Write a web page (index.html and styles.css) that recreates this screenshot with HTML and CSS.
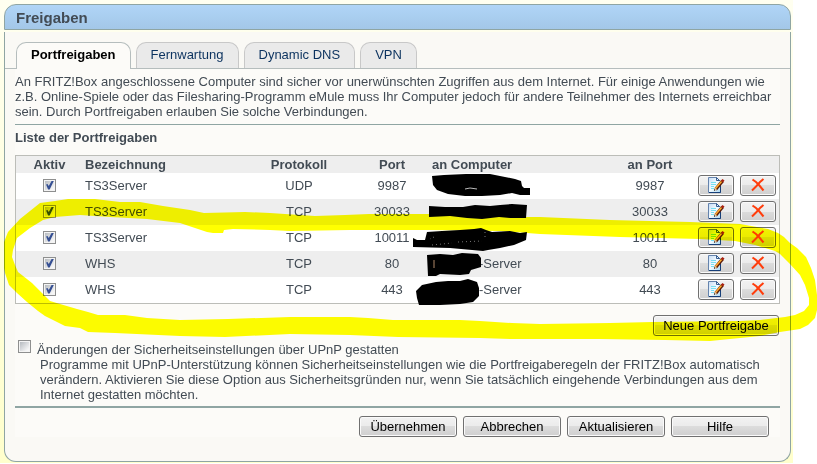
FILE: index.html
```html
<!DOCTYPE html>
<html lang="de">
<head>
  <meta charset="UTF-8" />
  <meta name="viewport" content="width=device-width, initial-scale=1.0" />
  <title>Freigaben</title>
  <link rel="stylesheet" href="styles.css">
</head>
<body>
  <!-- Shared button icons -->
  <svg class="defs" width="0" height="0" aria-hidden="true">
    <defs>
      <linearGradient id="paper" x1="0" y1="0" x2="1" y2="1">
        <stop offset="0" stop-color="#c5dcf5" />
        <stop offset="0.5" stop-color="#f4fbff" />
        <stop offset="1" stop-color="#a8d8f4" />
      </linearGradient>
      <symbol id="edit" viewBox="0 0 18 18">
        <path d="M1.5 1.5h8l4 4v11h-12z" fill="url(#paper)" stroke="#6583ac" />
        <path d="M13.5 9v7.5H2" fill="none" stroke="#173f78" />
        <path d="M9.5 1.5v3h3z" fill="#e8f3ff" stroke="#365d91" />
        <path d="M4 6.5h5M4 8.5h5M4 10.5h3M4 12.5h3" stroke="#76dff2" />
        <path d="M8.500 13.500L15.500 5" stroke="#5c1c08" stroke-width="3.400" />
        <path d="M8.500 12.500L14.500 5.500" stroke="#ffab2e" stroke-width="1.600" />
        <path d="M7 15l.5-3.500 2.500 2z" fill="#f5d6a8" />
        <path d="M7 15l.2-2 1.300 1z" fill="#111" />
        <path d="M14 4.500l1.500-1.500 2 1.500-1.500 2z" fill="#ab2110" />
      </symbol>
      <symbol id="delete" viewBox="0 0 14 14">
        <path d="M1.500 1.500L5 4l3 3 4.500 5.500M12.500 1L9 4 5.500 8 1 12.500" fill="none" stroke="#ff3d0c" stroke-width="2" />
      </symbol>
    </defs>
  </svg>

  <div class="page">
    <main class="panel">
      <h1>Freigaben</h1>
      <div class="panel-body">
        <nav class="tabs">
          <a class="tab active" href="#port">Portfreigaben</a>
          <a class="tab" href="#fern">Fernwartung</a>
          <a class="tab" href="#dns">Dynamic DNS</a>
          <a class="tab" href="#vpn">VPN</a>
        </nav>
        <div class="content">
          <p class="intro">An FRITZ!Box angeschlossene Computer sind sicher vor unerwünschten Zugriffen aus dem Internet. Für einige Anwendungen wie z.B. Online-Spiele oder das Filesharing-Programm eMule muss Ihr Computer jedoch für andere Teilnehmer des Internets erreichbar sein. Durch Portfreigaben erlauben Sie solche Verbindungen.</p>
          <h2>Liste der Portfreigaben</h2>
          <table class="rules">
            <colgroup>
              <col class="col-active"><col class="col-name"><col class="col-proto"><col class="col-port"><col><col class="col-target"><col class="col-actions">
            </colgroup>
            <thead>
              <tr>
                <th>Aktiv</th>
                <th class="left">Bezeichnung</th>
                <th>Protokoll</th>
                <th>Port</th>
                <th class="host">an Computer</th>
                <th>an Port</th>
                <th></th>
              </tr>
            </thead>
            <tbody>
              <tr>
                <td><input type="checkbox" aria-label="Aktiv" checked></td>
                <td class="left">TS3Server</td>
                <td>UDP</td>
                <td>9987</td>
                <td class="host"></td>
                <td>9987</td>
                <td><div class="actions">
                  <button aria-label="Bearbeiten"><svg class="edit"><use href="#edit" /></svg></button>
                  <button aria-label="Löschen"><svg class="delete"><use href="#delete" /></svg></button>
                </div></td>
              </tr>
              <tr>
                <td><input type="checkbox" aria-label="Aktiv" checked></td>
                <td class="left">TS3Server</td>
                <td>TCP</td>
                <td>30033</td>
                <td class="host"></td>
                <td>30033</td>
                <td><div class="actions">
                  <button aria-label="Bearbeiten"><svg class="edit"><use href="#edit" /></svg></button>
                  <button aria-label="Löschen"><svg class="delete"><use href="#delete" /></svg></button>
                </div></td>
              </tr>
              <tr>
                <td><input type="checkbox" aria-label="Aktiv" checked></td>
                <td class="left">TS3Server</td>
                <td>TCP</td>
                <td>10011</td>
                <td class="host"></td>
                <td>10011</td>
                <td><div class="actions">
                  <button aria-label="Bearbeiten"><svg class="edit"><use href="#edit" /></svg></button>
                  <button aria-label="Löschen"><svg class="delete"><use href="#delete" /></svg></button>
                </div></td>
              </tr>
              <tr>
                <td><input type="checkbox" aria-label="Aktiv" checked></td>
                <td class="left">WHS</td>
                <td>TCP</td>
                <td>80</td>
                <td class="host masked">-Server</td>
                <td>80</td>
                <td><div class="actions">
                  <button aria-label="Bearbeiten"><svg class="edit"><use href="#edit" /></svg></button>
                  <button aria-label="Löschen"><svg class="delete"><use href="#delete" /></svg></button>
                </div></td>
              </tr>
              <tr>
                <td><input type="checkbox" aria-label="Aktiv" checked></td>
                <td class="left">WHS</td>
                <td>TCP</td>
                <td>443</td>
                <td class="host masked">-Server</td>
                <td>443</td>
                <td><div class="actions">
                  <button aria-label="Bearbeiten"><svg class="edit"><use href="#edit" /></svg></button>
                  <button aria-label="Löschen"><svg class="delete"><use href="#delete" /></svg></button>
                </div></td>
              </tr>
            </tbody>
          </table>
          <div class="add">
            <button>Neue Portfreigabe</button>
          </div>
          <div class="upnp">
            <input type="checkbox" id="upnp">
            <label for="upnp">Änderungen der Sicherheitseinstellungen über UPnP gestatten</label>
          </div>
          <p class="hint">Programme mit UPnP-Unterstützung können Sicherheitseinstellungen wie die Portfreigaberegeln der FRITZ!Box automatisch verändern. Aktivieren Sie diese Option aus Sicherheitsgründen nur, wenn Sie tatsächlich eingehende Verbindungen aus dem Internet gestatten möchten.</p>
          <div class="buttons">
            <button>Übernehmen</button>
            <button>Abbrechen</button>
            <button>Aktualisieren</button>
            <button>Hilfe</button>
          </div>
        </div>
      </div>
    </main>
  </div>

  <!-- Blacked-out host names -->
  <svg class="overlay" width="817" height="464" viewBox="0 0 817 464" aria-hidden="true">
    <path d="M432 176L444 175 466 174 490 174 505 177 515 179 521 181 522 186 524 188H530V195H520L512 193 500 195 482 196 465 196 448 194 437 190 433 185z" />
    <path d="M465 189l5-1 7 1" fill="none" stroke="#bbb" />
    <path d="M429 206L445 207 463 207 475 205 490 206 500 205 512 204 527 205 526 218 510 218 499 217 482 219 467 218 450 216 429 217z" />
    <path d="M413 238L417 240 425 240 427 232 442 231 460 230 474 229 481 228 486 230 492 232 510 231 520 233 527 232 526 240 514 245 500 248 488 250 483 251 472 250 450 248 413 247z" />
    <path d="M434 237l-4 2M432 245l20-2M458 242l24-1M485 232v8" fill="none" stroke="#777" stroke-dasharray="1 3" />
    <path d="M427 255L440 254 453 255 462 253 478 254 481 258 481 267 471 270 469 274 460 275 440 274 436 276 428 276z" />
    <path d="M434 260v8" stroke="#b08868" />
    <path d="M416 291L422 285 436 282 448 281 460 281 468 279 477 282 479 288V296L473 302 460 304 440 305 419 305 417 298z" />
  </svg>

  <!-- Text marker around the lower rules -->
  <svg class="overlay marker" width="817" height="464" viewBox="0 0 817 464" aria-hidden="true">
    <path fill="#ff0" fill-rule="evenodd" d="M4 242L8 232 20 219 30 211 40 203 55 201 68 199 95 199 120 202 140 202 163 206 190 210 204 213 245 212 270 213 315 216 345 215 369 214 430 214 525 217 540 217 610 220 690 222 740 224 768 229 778 233 784 237 790 243 797 248 806 257 811 268 815 280 817 295V310L815 318 808 325 800 329 780 332 760 336 740 338 710 341 665 340 600 339 510 339 480 338 398 337 350 335 290 334 225 337 180 336 115 333 88 332 80 328 65 326 45 316 38 311 27 302 17 293 9 285 5 273 4 268z
      M12 257L15 265 18 272 32 283 42 293 50 301 60 304 77 309 88 312 98 315 125 315 147 318 180 320 228 319 290 317 350 317 368 318 393 320 460 320 480 321 512 323 540 324 610 323 653 322 740 321 760 320 785 317 795 315 804 311 809 305V298L805 285 800 275 790 264 780 254 775 251 755 245 735 241 700 239 620 237 540 234 527 233 500 231 430 230 350 230 290 231 270 230 233 229 224 230 223 233 213 233 207 232 180 223 147 219 110 217 80 215 55 217 43 220 30 228 17 238 13 250z" />
  </svg>
</body>
</html>
```

FILE: styles.css
```css
* { margin: 0; padding: 0; box-sizing: border-box; }
body {
  background: #fff;
  color: #424b54;
  font: 13px/15px "Liberation Sans", Arial, sans-serif;
}
.defs { position: absolute; }
/* Cream page strip behind the panel */
.page {
  margin-right: 24px;
  padding: 4px 2px 1px 4px;
  background: linear-gradient(#fffff0, #ffffcc);
}
/* Panel */
h1 {
  height: 26px;
  padding-left: 11px;
  border: 1px solid #8fa5a3;
  border-radius: 12px 12px 0 0;
  background: linear-gradient(#b0d5f7, #a3c7e8);
  font-size: 15px;
  line-height: 26px;
}
.panel-body {
  margin-top: 2px;
  padding: 10px 0 24px;
  border: 1px solid #8fa5a3;
  border-top: 0;
  border-radius: 0 0 12px 12px;
  background: #faf9f5;
}
/* Tabs */
.tabs {
  display: flex;
  gap: 5px;
  padding-left: 11px;
  border-bottom: 1px solid #b5bdbd;
}
.tab {
  height: 26px;
  padding: 0 14px;
  border: 1px solid #c8c8c8;
  border-bottom: 0;
  border-radius: 10px 10px 0 0;
  background: #eaeaea;
  color: #0b325f;
  line-height: 24px;
  text-decoration: none;
}
.tab.active {
  height: 27px;
  margin-bottom: -1px;
  border-color: #b5bdbd;
  background: #fcfbf8;
  color: #000;
  font-weight: bold;
}
.content {
  margin: 0 10px;
  padding-top: 5px;
  background: #fcfbf8;
}
.intro {
  padding-bottom: 5px;
  border-bottom: 1px solid #8fa5a3;
}
h2 {
  padding: 5px 0 10px;
  font-size: 13px;
}
/* Rules table */
.rules {
  width: 100%;
  table-layout: fixed;
  border-collapse: separate;
  border-spacing: 0;
  border: 1px solid #bcbdb8;
  background: #fff;
}
.col-active { width: 67px; }
.col-name { width: 163px; }
.col-proto { width: 106px; }
.col-port { width: 80px; }
.col-target { width: 88px; }
.col-actions { width: 85px; }
.rules th {
  height: 17px;
  background: #eee;
}
.rules td {
  height: 26px;
  padding-bottom: 2px;
  text-align: center;
}
.rules tbody tr:nth-child(even) { background: #eee; }
.rules .left {
  padding-left: 2px;
  text-align: left;
}
.rules .host { text-align: left; }
.rules .masked { padding-left: 47px; }
.actions {
  display: flex;
  gap: 6px;
  padding-left: 4px;
}
/* Buttons */
button {
  display: flex;
  align-items: center;
  justify-content: center;
  height: 21px;
  border: 1px solid #707070;
  border-radius: 3px;
  background: linear-gradient(#f2f2f2, #ebebeb 50%, #dcdcdc 50%, #cfcfcf);
  box-shadow: inset 0 0 0 1px #fafafa;
  color: #000;
  font: inherit;
}
.actions button { width: 36px; }
.edit { width: 18px; height: 18px; }
.delete { width: 14px; height: 14px; }
.add {
  display: flex;
  justify-content: flex-end;
  padding: 11px 1px 4px 0;
}
.add button { width: 126px; }
/* Check boxes */
input[type="checkbox"] {
  display: block;
  flex: none;
  width: 13px;
  height: 13px;
  border: 1px solid #8e8f8f;
  outline: 1px solid #f4f4f4;
  outline-offset: -2px;
  background: linear-gradient(135deg, #aeb3b9, #f6f6f6 80%);
  background-clip: content-box;
  padding: 1px;
  appearance: none;
}
td input[type="checkbox"] { margin: 0 auto; }
input:checked::before {
  content: "";
  display: block;
  width: 9px;
  height: 9px;
  background: #354f93;
  clip-path: polygon(12% 45%, 28% 40%, 42% 62%, 76% 0, 100% 0, 52% 100%, 34% 100%);
}
.upnp {
  display: flex;
  gap: 6px;
  padding: 0 3px;
}
.upnp label { padding-top: 2px; }
.hint {
  padding: 0 15px 4px 25px;
  border-bottom: 2px solid #8fa5a3;
}
.buttons {
  display: flex;
  justify-content: flex-end;
  gap: 6px;
  padding: 8px 11px 0 0;
}
.buttons button { width: 98px; }
/* Pen marks lying over the page */
.overlay {
  position: absolute;
  top: 0;
  left: 0;
  pointer-events: none;
}
.marker { mix-blend-mode: multiply; }
```
